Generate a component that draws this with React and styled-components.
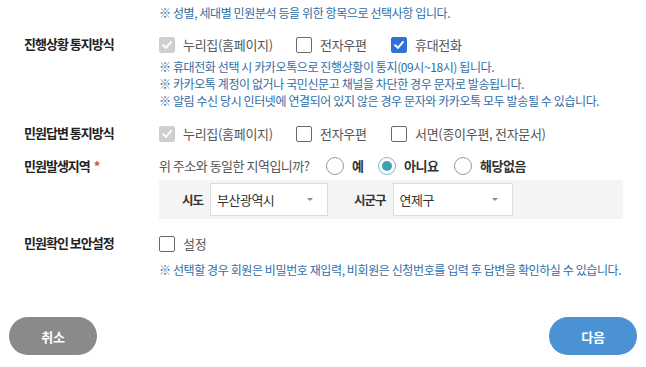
import React from 'react'
import styled, { createGlobalStyle, css } from 'styled-components'

var GlobalStyle = createGlobalStyle`
  html, body {
    margin: 0;
    padding: 0;
    background: #fff;
  }
  body {
    font-family: "Noto Sans CJK KR", "Noto Sans", sans-serif;
    color: #333;
  }
`

var Page = styled.div`
  width: 646px;
  height: 367px;
  overflow: hidden;
  padding-top: 4px;
  box-sizing: border-box;
`

var Row = styled.div`
  display: grid;
  grid-template-columns: 159px 464px;
  margin-top: ${(p) => p.$gap || 0}px;
`

var Label = styled.div`
  padding-left: 24px;
  font-size: 13px;
  font-weight: 700;
  letter-spacing: -1px;
  color: #222;
  line-height: 17px;
  .req {
    color: #e2483d;
    margin-left: 4px;
    letter-spacing: 0;
  }
`

var Content = styled.div`
  display: flex;
  flex-direction: column;
`

var Notes = styled.div`
  margin-top: ${(p) => p.$gap || 0}px;
`

var Note = styled.div`
  font-size: 12px;
  letter-spacing: -0.4px;
  line-height: 17px;
  color: #2f6ea8;
  white-space: nowrap;
`

// first two options sit in fixed columns, as in the original form
var Options = styled.div`
  display: grid;
  grid-template-columns: 137px 95px auto;
  align-items: center;
  height: 17px;
`

var Option = styled.label`
  display: flex;
  align-items: center;
  gap: 8px;
  font-size: 13px;
  letter-spacing: -0.3px;
  color: #555;
  white-space: nowrap;
`

var Box = styled.span`
  width: 16px;
  height: 16px;
  box-sizing: border-box;
  border-radius: 2px;
  display: inline-flex;
  align-items: center;
  justify-content: center;
  flex: none;
  ${(p) =>
    p.$state === 'disabled'
      ? css`background: #cfcfcf; border: 1px solid #cfcfcf;`
      : p.$state === 'checked'
        ? css`background: #2f72d6; border: 1px solid #2f72d6;`
        : css`background: #fff; border: 1px solid #6a6a6a;`}
`

var Radios = styled.div`
  display: flex;
  align-items: center;
  height: 17px;
`

var Question = styled.span`
  width: 167px;
  font-size: 13px;
  letter-spacing: -0.5px;
  color: #555;
  white-space: nowrap;
`

var RadioOption = styled.label`
  display: flex;
  align-items: center;
  gap: 8px;
  width: ${(p) => (p.$w ? p.$w + 'px' : 'auto')};
  font-size: 13px;
  font-weight: 700;
  letter-spacing: -0.5px;
  color: #333;
`

var Circle = styled.span`
  width: 18px;
  height: 18px;
  box-sizing: border-box;
  border-radius: 50%;
  border: 1px solid ${(p) => (p.$on ? '#7fb6c6' : '#9a9a9a')};
  display: inline-flex;
  align-items: center;
  justify-content: center;
  background: #fff;
  flex: none;
  &::after {
    content: '';
    width: 10px;
    height: 10px;
    border-radius: 50%;
    background: ${(p) => (p.$on ? '#3f9fb3' : 'transparent')};
  }
`

var Region = styled.div`
  margin-top: 6px;
  background: #f4f4f4;
  height: 39px;
  display: flex;
  align-items: center;
  padding-left: 23px;
  box-sizing: border-box;
`

var RegionLabel = styled.span`
  font-size: 12.5px;
  font-weight: 700;
  letter-spacing: -1px;
  color: #333;
  margin-right: 7px;
  margin-left: ${(p) => p.$offset || 0}px;
`

var Select = styled.div`
  width: ${(p) => p.$w}px;
  height: 33px;
  box-sizing: border-box;
  background: #fff;
  border: 1px solid #dcdcdc;
  display: flex;
  align-items: center;
  justify-content: space-between;
  padding: 0 14px 0 6px;
  font-size: 13px;
  letter-spacing: -0.5px;
  color: #333;
  &::after {
    content: '';
    border-left: 3px solid transparent;
    border-right: 3px solid transparent;
    border-top: 3px solid #888;
  }
`

var Buttons = styled.div`
  display: flex;
  justify-content: space-between;
  padding: 0 9px;
  margin-top: 39px;
`

var Button = styled.button`
  width: 88px;
  height: 38px;
  border: none;
  border-radius: 19px;
  background: ${(p) => (p.$primary ? '#4a92d3' : '#8a8a8a')};
  color: #fff;
  font-family: inherit;
  font-size: 13px;
  font-weight: 700;
  letter-spacing: -0.3px;
  padding: 0;
`

function Check ({ state }) {
  return (
    <Box $state={state}>
      {state !== 'empty' && (
        <svg width='12' height='12' viewBox='0 0 12 12'>
          <path d='M2.2 6.3 L4.9 8.9 L9.9 3.2' fill='none' stroke='#fff' strokeWidth='2' strokeLinecap='square' />
        </svg>
      )}
    </Box>
  )
}

function CheckOption ({ state, children }) {
  return (
    <Option>
      <Check state={state} />
      {children}
    </Option>
  )
}

export default function App () {
  return (
    <Page>
      <GlobalStyle />
      <Row>
        <div />
        <Note>※ 성별, 세대별 민원분석 등을 위한 항목으로 선택사항 입니다.</Note>
      </Row>

      <Row $gap={14}>
        <Label>진행상황 통지방식</Label>
        <Content>
          <Options>
            <CheckOption state='disabled'>누리집(홈페이지)</CheckOption>
            <CheckOption state='empty'>전자우편</CheckOption>
            <CheckOption state='checked'>휴대전화</CheckOption>
          </Options>
          <Notes $gap={6}>
            <Note>※ 휴대전화 선택 시 카카오톡으로 진행상황이 통지(09시~18시) 됩니다.</Note>
            <Note>※ 카카오톡 계정이 없거나 국민신문고 채널을 차단한 경우 문자로 발송됩니다.</Note>
            <Note>※ 알림 수신 당시 인터넷에 연결되어 있지 않은 경우 문자와 카카오톡 모두 발송될 수 있습니다.</Note>
          </Notes>
        </Content>
      </Row>

      <Row $gap={15}>
        <Label>민원답변 통지방식</Label>
        <Options>
          <CheckOption state='disabled'>누리집(홈페이지)</CheckOption>
          <CheckOption state='empty'>전자우편</CheckOption>
          <CheckOption state='empty'>서면(종이우편, 전자문서)</CheckOption>
        </Options>
      </Row>

      <Row $gap={16}>
        <Label>민원발생지역<span className='req'>*</span></Label>
        <Content>
          <Radios>
            <Question>위 주소와 동일한 지역입니까?</Question>
            <RadioOption $w={52}><Circle />예</RadioOption>
            <RadioOption $w={76}><Circle $on />아니요</RadioOption>
            <RadioOption><Circle />해당없음</RadioOption>
          </Radios>
          <Region>
            <RegionLabel>시도</RegionLabel>
            <Select $w={118}>부산광역시</Select>
            <RegionLabel $offset={26}>시군구</RegionLabel>
            <Select $w={120}>연제구</Select>
          </Region>
        </Content>
      </Row>

      <Row $gap={15}>
        <Label>민원확인 보안설정</Label>
        <Content>
          <Options>
            <CheckOption state='empty'>설정</CheckOption>
          </Options>
          <Notes $gap={10}>
            <Note>※ 선택할 경우 회원은 비밀번호 재입력, 비회원은 신청번호를 입력 후 답변을 확인하실 수 있습니다.</Note>
          </Notes>
        </Content>
      </Row>

      <Buttons>
        <Button>취소</Button>
        <Button $primary>다음</Button>
      </Buttons>
    </Page>
  )
}
